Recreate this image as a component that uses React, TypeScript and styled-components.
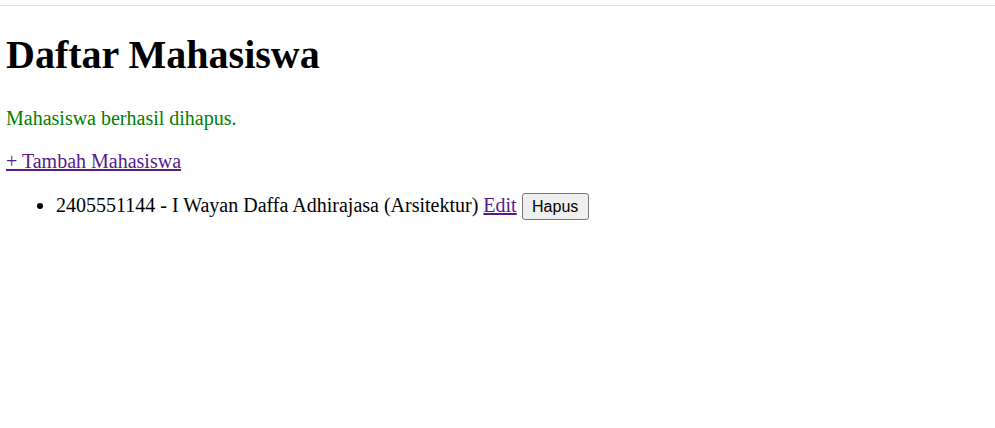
import React from "react";
import styled, { createGlobalStyle } from "styled-components";

const Global = createGlobalStyle`
  html, body { margin: 0; padding: 0; background: #fff; }
  body { font-family: "Liberation Serif", "Times New Roman", serif; font-size: 20px; color: #000; }
`;

const TopRule = styled.div`
  height: 5px;
  border-bottom: 1px solid #e3e3e3;
`;

const Page = styled.main`
  padding: 0 6px;
  display: flow-root;
`;

const Title = styled.h1`
  font-size: 40px;
  font-weight: bold;
  margin: 26px 0 29px;
  line-height: 46px;
`;

const Notice = styled.p`
  color: #008000;
  margin: 0 0 20px;
  line-height: 23px;
`;

const Para = styled.p`
  margin: 0 0 20px;
  line-height: 23px;
`;

const Link = styled.a`
  color: #551a8b;
  text-decoration: underline;
`;

const List = styled.ul`
  margin: 0;
  padding-left: 50px;
  line-height: 23px;
`;

const Item = styled.li`
  list-style: disc;
`;

const Button = styled.button`
  font-family: "Liberation Sans", Arial, sans-serif;
  font-size: 16px;
  padding: 0 9px;
  margin: 0;
  width: 67px;
  height: 27px;
  background: #efefef;
  border: 1px solid #767676;
  border-radius: 3px;
  color: #000;
  vertical-align: baseline;
`;

export default function App() {
  return (
    <>
      <Global />
      <TopRule />
      <Page>
        <Title>Daftar Mahasiswa</Title>
        <Notice>Mahasiswa berhasil dihapus.</Notice>
        <Para>
          <Link href="#">+ Tambah Mahasiswa</Link>
        </Para>
        <List>
          <Item>
            2405551144 - I Wayan Daffa Adhirajasa (Arsitektur) <Link href="#">Edit</Link>{" "}
            <Button>Hapus</Button>
          </Item>
        </List>
      </Page>
    </>
  );
}
